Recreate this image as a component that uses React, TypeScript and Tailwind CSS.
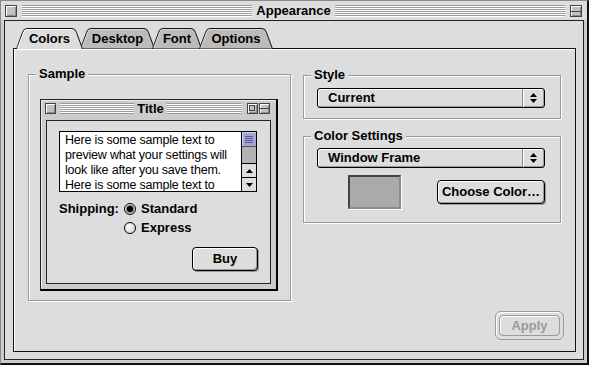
import React from 'react';

const stripes =
  'bg-[repeating-linear-gradient(to_bottom,#9a9a9a_0px,#9a9a9a_1px,#ffffff_1px,#ffffff_2px)]';

const tabs = [
  { label: 'Colors', w: 67, active: true },
  { label: 'Desktop', w: 75, active: false },
  { label: 'Font', w: 50, active: false },
  { label: 'Options', w: 74, active: false },
];

const tabPath = (w: number, closed: boolean) =>
  `M0.5 21 L6.5 4.5 Q7.5 0.5 11 0.5 H${w - 11} Q${w - 7.5} 0.5 ${w - 6.5} 4.5 L${w - 0.5} 21` +
  (closed ? ' Z' : '');

function Tab({ label, w, active }: { label: string; w: number; active: boolean }) {
  return (
    <div
      className={`relative h-[21px] flex items-start justify-center pt-[3px] text-[13px] font-bold leading-[15px] ${
        active ? 'z-20' : 'z-0'
      } -ml-[3px] first:ml-0`}
      style={{ width: w }}
    >
      <svg className="absolute inset-0" width={w} height={21} viewBox={`0 0 ${w} 21`}>
        <path d={tabPath(w, !active)} fill={active ? '#dddddd' : '#bbbbbb'} stroke="#111" strokeWidth="1" />
        <path
          d={`M1.8 20 L7.6 5 Q8.5 1.6 11.2 1.5 H${w - 11}`}
          fill="none"
          stroke={active ? '#ffffff' : '#d6d6d6'}
          strokeWidth="1"
        />
      </svg>
      <span className="relative">{label}</span>
    </div>
  );
}

function Box({ size, children, col }: { size: string; children?: React.ReactNode; col?: boolean }) {
  return (
    <div
      className={`${size} shrink-0 flex ${col ? 'flex-col justify-center' : ''} border border-[#444] bg-[#c2c2c2] shadow-[inset_1px_1px_0_#fff,inset_-1px_-1px_0_#8a8a8a]`}
    >
      {children}
    </div>
  );
}

function Group({ label, className, children }: { label: string; className: string; children?: React.ReactNode }) {
  return (
    <div className={`relative border border-[#9a9a9a] shadow-[inset_1px_1px_0_#fff,1px_1px_0_#fff] ${className}`}>
      <span className="absolute left-[7px] -top-[9px] px-[3px] bg-[#dddddd] text-[13px] font-bold leading-[16px]">
        {label}
      </span>
      {children}
    </div>
  );
}

function PopupArrows() {
  return (
    <svg width="7" height="10" viewBox="0 0 7 10">
      <path d="M3.5 0 L7 4 H0 Z M0 6 H7 L3.5 10 Z" fill="#000" />
    </svg>
  );
}

function Popup({ value, className }: { value: string; className: string }) {
  return (
    <div
      className={`flex w-[228px] h-[20px] rounded-[3px] border border-black bg-[#dddddd] shadow-[inset_1px_1px_0_#fff,inset_-1px_-1px_0_#9a9a9a] ${className}`}
    >
      <div className="flex-1 pl-[10px] text-[13px] font-bold leading-[18px]">{value}</div>
      <div className="w-[22px] flex items-center justify-center border-l border-[#8a8a8a] shadow-[inset_1px_0_0_#fff]">
        <PopupArrows />
      </div>
    </div>
  );
}

function Button({ label, className }: { label: string; className: string }) {
  return (
    <div
      className={`flex items-center justify-center rounded-[4px] border border-black bg-[#dddddd] text-[13px] font-bold shadow-[inset_1px_1px_0_#fff,inset_-1px_-1px_0_#9a9a9a,1px_1px_0_#9a9a9a] ${className}`}
    >
      {label}
    </div>
  );
}

function Radio({ checked, label }: { checked?: boolean; label: string }) {
  return (
    <div className="flex items-center h-[15px]">
      <div className="w-[12px] h-[12px] rounded-full border border-black bg-[radial-gradient(circle_at_35%_35%,#ffffff,#c8c8c8)] flex items-center justify-center">
        {checked && <div className="w-[6px] h-[6px] rounded-full bg-black shadow-[0_0_0_1px_#777]" />}
      </div>
      <span className="ml-[5px] text-[13px] font-bold leading-[15px]">{label}</span>
    </div>
  );
}

function SampleWindow() {
  return (
    <div className="ml-[11px] mt-[24px] w-[238px] h-[192px] flex flex-col border-l border-t border-[#222] border-r-2 border-b-2 border-r-black border-b-black bg-[#cccccc] shadow-[inset_1px_1px_0_#eeeeee]">
      <div className="h-[20px] flex items-start pt-[3px] pl-[4px] pr-[6px]">
        <Box size="w-[11px] h-[11px]" />
        <div className={`flex-1 h-[11px] ml-[4px] ${stripes}`} />
        <span className="px-[3px] text-[13px] font-bold leading-[12px]">Title</span>
        <div className={`flex-1 h-[11px] mr-[6px] ${stripes}`} />
        <Box size="w-[11px] h-[11px]">
          <div className="w-[6px] h-[6px] border border-[#444] ml-[1px] mt-[1px]" />
        </Box>
        <div className="w-[1px]" />
        <Box size="w-[11px] h-[11px]" col>
          <div className="h-px bg-[#444]" />
        </Box>
      </div>
      <div className="flex-1 mx-[5px] mb-[5px] border border-[#222] bg-[#dddddd] flex flex-col pl-[12px] pr-[12px] pt-[10px]">
        <div className="w-[198px] h-[61px] flex border border-black bg-white">
          <div className="flex-1 pl-[5px] pt-[1px] overflow-hidden text-[12.5px] tracking-[-0.2px] leading-[15px] whitespace-nowrap">
            <div>Here is some sample text to</div>
            <div>preview what your settings will</div>
            <div>look like after you save them.</div>
            <div>Here is some sample text to</div>
          </div>
          <div className="w-[15px] flex flex-col border-l border-black">
            <div className="h-[15px] flex flex-col justify-center gap-[1px] px-[3px] bg-[#a6a6d6] border-b border-[#555] shadow-[inset_1px_1px_0_#d4d4f0]">
              <div className="h-px bg-[#55558a]" />
              <div className="h-px bg-[#55558a]" />
              <div className="h-px bg-[#55558a]" />
              <div className="h-px bg-[#55558a]" />
            </div>
            <div className="flex-1 bg-[#b2b2b2]" />
            <div className="h-[14px] border-t border-black bg-[#dddddd] flex items-center justify-center">
              <svg width="7" height="4" viewBox="0 0 7 4">
                <path d="M3.5 0 L7 4 H0 Z" fill="#000" />
              </svg>
            </div>
            <div className="h-[14px] border-t border-black bg-[#dddddd] flex items-center justify-center">
              <svg width="7" height="4" viewBox="0 0 7 4">
                <path d="M0 0 H7 L3.5 4 Z" fill="#000" />
              </svg>
            </div>
          </div>
        </div>
        <div className="mt-[9px] flex">
          <div className="w-[65px] text-[13px] font-bold leading-[15px]">Shipping:</div>
          <div className="flex flex-col gap-[4px]">
            <Radio checked label="Standard" />
            <Radio label="Express" />
          </div>
        </div>
        <Button label="Buy" className="mt-[12px] self-end w-[66px] h-[24px]" />
      </div>
    </div>
  );
}

export default function App() {
  return (
    <div className="w-[589px] h-[365px] flex flex-col bg-[#cccccc] border-l border-t border-[#8a8a8a] border-r-2 border-b-2 border-r-[#111] border-b-[#111] font-['Liberation_Sans',Arial,sans-serif] text-black select-none">
      {/* title bar */}
      <div className="h-[19px] flex items-start pt-[4px] pl-[4px] pr-[5px] bg-[#dddddd]">
        <Box size="w-[12px] h-[12px]" />
        <div className={`flex-1 h-[12px] ml-[5px] ${stripes}`} />
        <span className="px-[4px] text-[13px] font-bold leading-[12px]">Appearance</span>
        <div className={`flex-1 h-[12px] mr-[5px] ${stripes}`} />
        <Box size="w-[12px] h-[12px]" col>
          <div className="h-px bg-[#444]" />
        </Box>
      </div>

      {/* window body */}
      <div className="flex-1 flex px-[3px] pb-[3px]">
        <div className="flex-1 flex flex-col border border-[#222] bg-[#dddddd] pl-[8px] pr-[7px] pt-[7px] pb-[7px]">
          <div className="relative z-10 flex pl-[3px] h-[21px] -mb-[1px]">
            {tabs.map((t) => (
              <Tab key={t.label} {...t} />
            ))}
          </div>

          <div className="flex-1 flex flex-col border border-[#111] shadow-[inset_1px_1px_0_#fff]">
            <div className="flex pl-[14px] pt-[25px]">
              <Group label="Sample" className="w-[263px] h-[227px]">
                <SampleWindow />
              </Group>

              <div className="ml-[12px] w-[258px] flex flex-col">
                <Group label="Style" className="mt-[1px] h-[44px]">
                  <Popup value="Current" className="ml-[13px] mt-[12px]" />
                </Group>
                <Group label="Color Settings" className="mt-[17px] h-[87px] flex flex-col">
                  <Popup value="Window Frame" className="ml-[13px] mt-[11px]" />
                  <div className="mt-[7px] ml-[44px] flex items-center">
                    <div className="w-[53px] h-[34px] border-2 border-t-[#444] border-l-[#444] border-r-[#8a8a8a] border-b-[#8a8a8a] bg-[#aaaaaa] shadow-[1px_1px_0_#fff]" />
                    <Button label="Choose Color…" className="ml-[36px] w-[108px] h-[24px]" />
                  </div>
                </Group>
              </div>
            </div>

            <div className="flex-1" />

            <div className="flex justify-end pr-[11px] pb-[11px]">
              <div className="w-[69px] h-[29px] flex rounded-[6px] border border-[#9a9a9a] bg-[#dddddd] p-[3px] shadow-[inset_1px_1px_0_#fff]">
                <div className="flex-1 flex items-center justify-center rounded-[4px] border border-[#9a9a9a] text-[13px] font-bold text-[#999999] shadow-[inset_1px_1px_0_#fff]">
                  Apply
                </div>
              </div>
            </div>
          </div>
        </div>
      </div>
    </div>
  );
}
